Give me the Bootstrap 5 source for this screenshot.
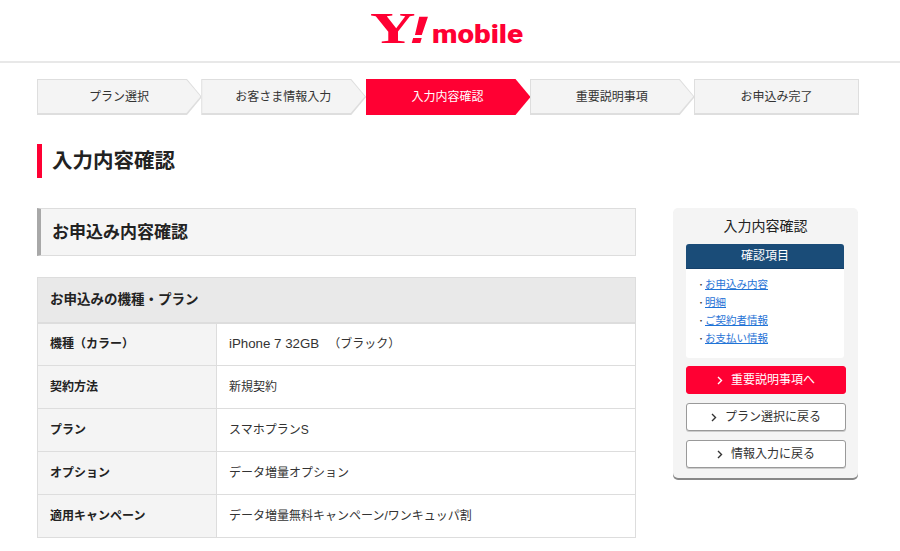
<!DOCTYPE html>
<html lang="ja">
<head>
<meta charset="utf-8">
<title>入力内容確認</title>
<link rel="stylesheet" href="https://cdn.jsdelivr.net/npm/bootstrap@5.3.0/dist/css/bootstrap.min.css">
<style>
body{font-family:"Liberation Sans","Noto Sans CJK JP",sans-serif;color:#333;font-size:12px;background:#fff;overflow:hidden;height:551px}
.site-head{height:63px;border-bottom:2px solid #e8e8e8}
.ym-logo{width:160px;height:58px;margin-top:2px;display:block}
.wrap-main{width:822px;margin-left:37px}
.step-row{margin-top:16px;height:36px}
.step-cell{position:relative;width:164.25px;height:36px;line-height:36px;text-align:center;font-size:12px;background:#dedede;color:#333;clip-path:polygon(0 0,150px 0,165px 50%,150px 100%,0 100%)}
.step-cell::before{content:"";position:absolute;inset:1px 1px 2px 1px;background:#f4f4f4;clip-path:polygon(0 0,148.5px 0,162.5px 50%,148.5px 100%,0 100%)}
.step-cell span{position:relative}
.step-cell.is-now{background:#ff0033;color:#fff}
.step-cell.is-now::before{display:none}
.step-cell.is-last{width:165px;clip-path:none}
.step-cell.is-last::before{clip-path:none}
.page-title{margin:29px 0 30px;height:34px;line-height:34px;border-left:5px solid #ff0033;padding-left:10px;font-size:20.5px;font-weight:700;color:#222}
.left-pane{width:599px}
.sec-title{height:48px;line-height:47px;border:1px solid #ddd;border-left:4px solid #a8a8a8;background:#f5f5f5;padding-left:11px;font-size:17px;font-weight:700;color:#222;margin:0 0 21px}
.plan-table{width:599px;table-layout:fixed;margin:0;border-collapse:collapse;font-size:12px}
.plan-table>*>tr>*{border:1px solid #ddd;padding:0 0 0 12px;height:43px;vertical-align:middle;color:#333;box-shadow:none}
.plan-table thead th{height:45px;background:#e9e9e9;font-size:13.5px;color:#222;font-weight:700;border-bottom-width:2px;padding-top:1px}
.plan-table tbody th{background:#f4f4f4;font-weight:700;color:#222}
.plan-table .col-key{width:179px}
.latin-val{font-size:13.3px;padding-right:3px}
.side-box{width:185px;height:270px;margin-left:37px;background:#f4f4f4;border-radius:5px;box-shadow:0 2px 0 #888;padding:9px 13px 0}
.side-title{font-size:14px;line-height:18px;text-align:center;color:#222;margin-bottom:9px}
.check-head{width:158px;height:25px;line-height:25px;background:#1a4c78;border-radius:3px 3px 0 0;text-align:center;color:#fff;font-size:12px;border-bottom:1px solid #15406a}
.check-body{width:158px;height:89px;background:#fff;border-radius:0 0 3px 3px;padding:6px 0 0 11px;margin:0;list-style:none;font-size:10.5px;line-height:18px}
.check-body li{height:18px}
.check-body a{color:#1f73d6}
.check-body li::before{content:"・";display:inline-block;width:8px;line-height:1;font-size:8px;color:#333}
.side-btn{display:block;width:160px;height:28px;line-height:26px;padding:0;border-radius:3px;font-size:12px;text-align:center;text-decoration:none;margin-top:9px;background:#fff;color:#333;border:1px solid #999;box-shadow:0 1px 0 #ccc}
.side-btn.is-red{margin-top:8px;background:#ff0033;border-color:#ff0033;color:#fff;box-shadow:none}
.side-btn:hover{background:#fff;color:#333;border-color:#999}
.side-btn.is-red:hover{background:#ff0033;color:#fff;border-color:#ff0033}
.chev{width:6px;height:9px;margin-right:8px;vertical-align:-0.5px}
</style>
</head>
<body>
<header class="site-head d-flex justify-content-center">
  <svg class="ym-logo" viewBox="0 0 160 58" role="img" aria-label="Y!mobile">
    <text transform="translate(0,41) scale(1.43,1)" font-family="Liberation Serif" font-weight="700" font-size="44" fill="#ff0033">Y</text>
    <text transform="translate(36,41) skewX(-16) scale(1.6,1)" font-family="Liberation Sans" font-weight="700" font-size="38" fill="#ff0033">!</text>
    <text x="62" y="41" font-family="Roboto" font-weight="900" font-size="26" fill="#ff0033" textLength="91" lengthAdjust="spacingAndGlyphs">mobile</text>
  </svg>
</header>
<main class="wrap-main">
  <div class="step-row d-flex">
    <div class="step-cell"><span>プラン選択</span></div>
    <div class="step-cell"><span>お客さま情報入力</span></div>
    <div class="step-cell is-now"><span>入力内容確認</span></div>
    <div class="step-cell"><span>重要説明事項</span></div>
    <div class="step-cell is-last"><span>お申込み完了</span></div>
  </div>
  <h1 class="page-title">入力内容確認</h1>
  <div class="d-flex align-items-start">
    <div class="left-pane">
      <h2 class="sec-title">お申込み内容確認</h2>
      <table class="table plan-table">
        <colgroup><col class="col-key"><col></colgroup>
        <thead><tr><th colspan="2">お申込みの機種・プラン</th></tr></thead>
        <tbody>
          <tr><th>機種（カラー）</th><td><span class="latin-val">iPhone 7 32GB</span>　（ブラック）</td></tr>
          <tr><th>契約方法</th><td>新規契約</td></tr>
          <tr><th>プラン</th><td>スマホプランS</td></tr>
          <tr><th>オプション</th><td>データ増量オプション</td></tr>
          <tr><th>適用キャンペーン</th><td>データ増量無料キャンペーン/ワンキュッパ割</td></tr>
        </tbody>
      </table>
    </div>
    <aside class="side-box">
      <div class="side-title">入力内容確認</div>
      <div class="check-head">確認項目</div>
      <ul class="check-body">
        <li><a href="#">お申込み内容</a></li>
        <li><a href="#">明細</a></li>
        <li><a href="#">ご契約者情報</a></li>
        <li><a href="#">お支払い情報</a></li>
      </ul>
      <a href="#" class="btn side-btn is-red"><svg class="chev" viewBox="0 0 6 9"><path d="M1 1l3.5 3.5L1 8" fill="none" stroke="currentColor" stroke-width="1.4"/></svg>重要説明事項へ</a>
      <a href="#" class="btn side-btn"><svg class="chev" viewBox="0 0 6 9"><path d="M1 1l3.5 3.5L1 8" fill="none" stroke="currentColor" stroke-width="1.4"/></svg>プラン選択に戻る</a>
      <a href="#" class="btn side-btn"><svg class="chev" viewBox="0 0 6 9"><path d="M1 1l3.5 3.5L1 8" fill="none" stroke="currentColor" stroke-width="1.4"/></svg>情報入力に戻る</a>
    </aside>
  </div>
</main>
<script src="https://cdn.jsdelivr.net/npm/bootstrap@5.3.0/dist/js/bootstrap.bundle.min.js"></script>
</body>
</html>
